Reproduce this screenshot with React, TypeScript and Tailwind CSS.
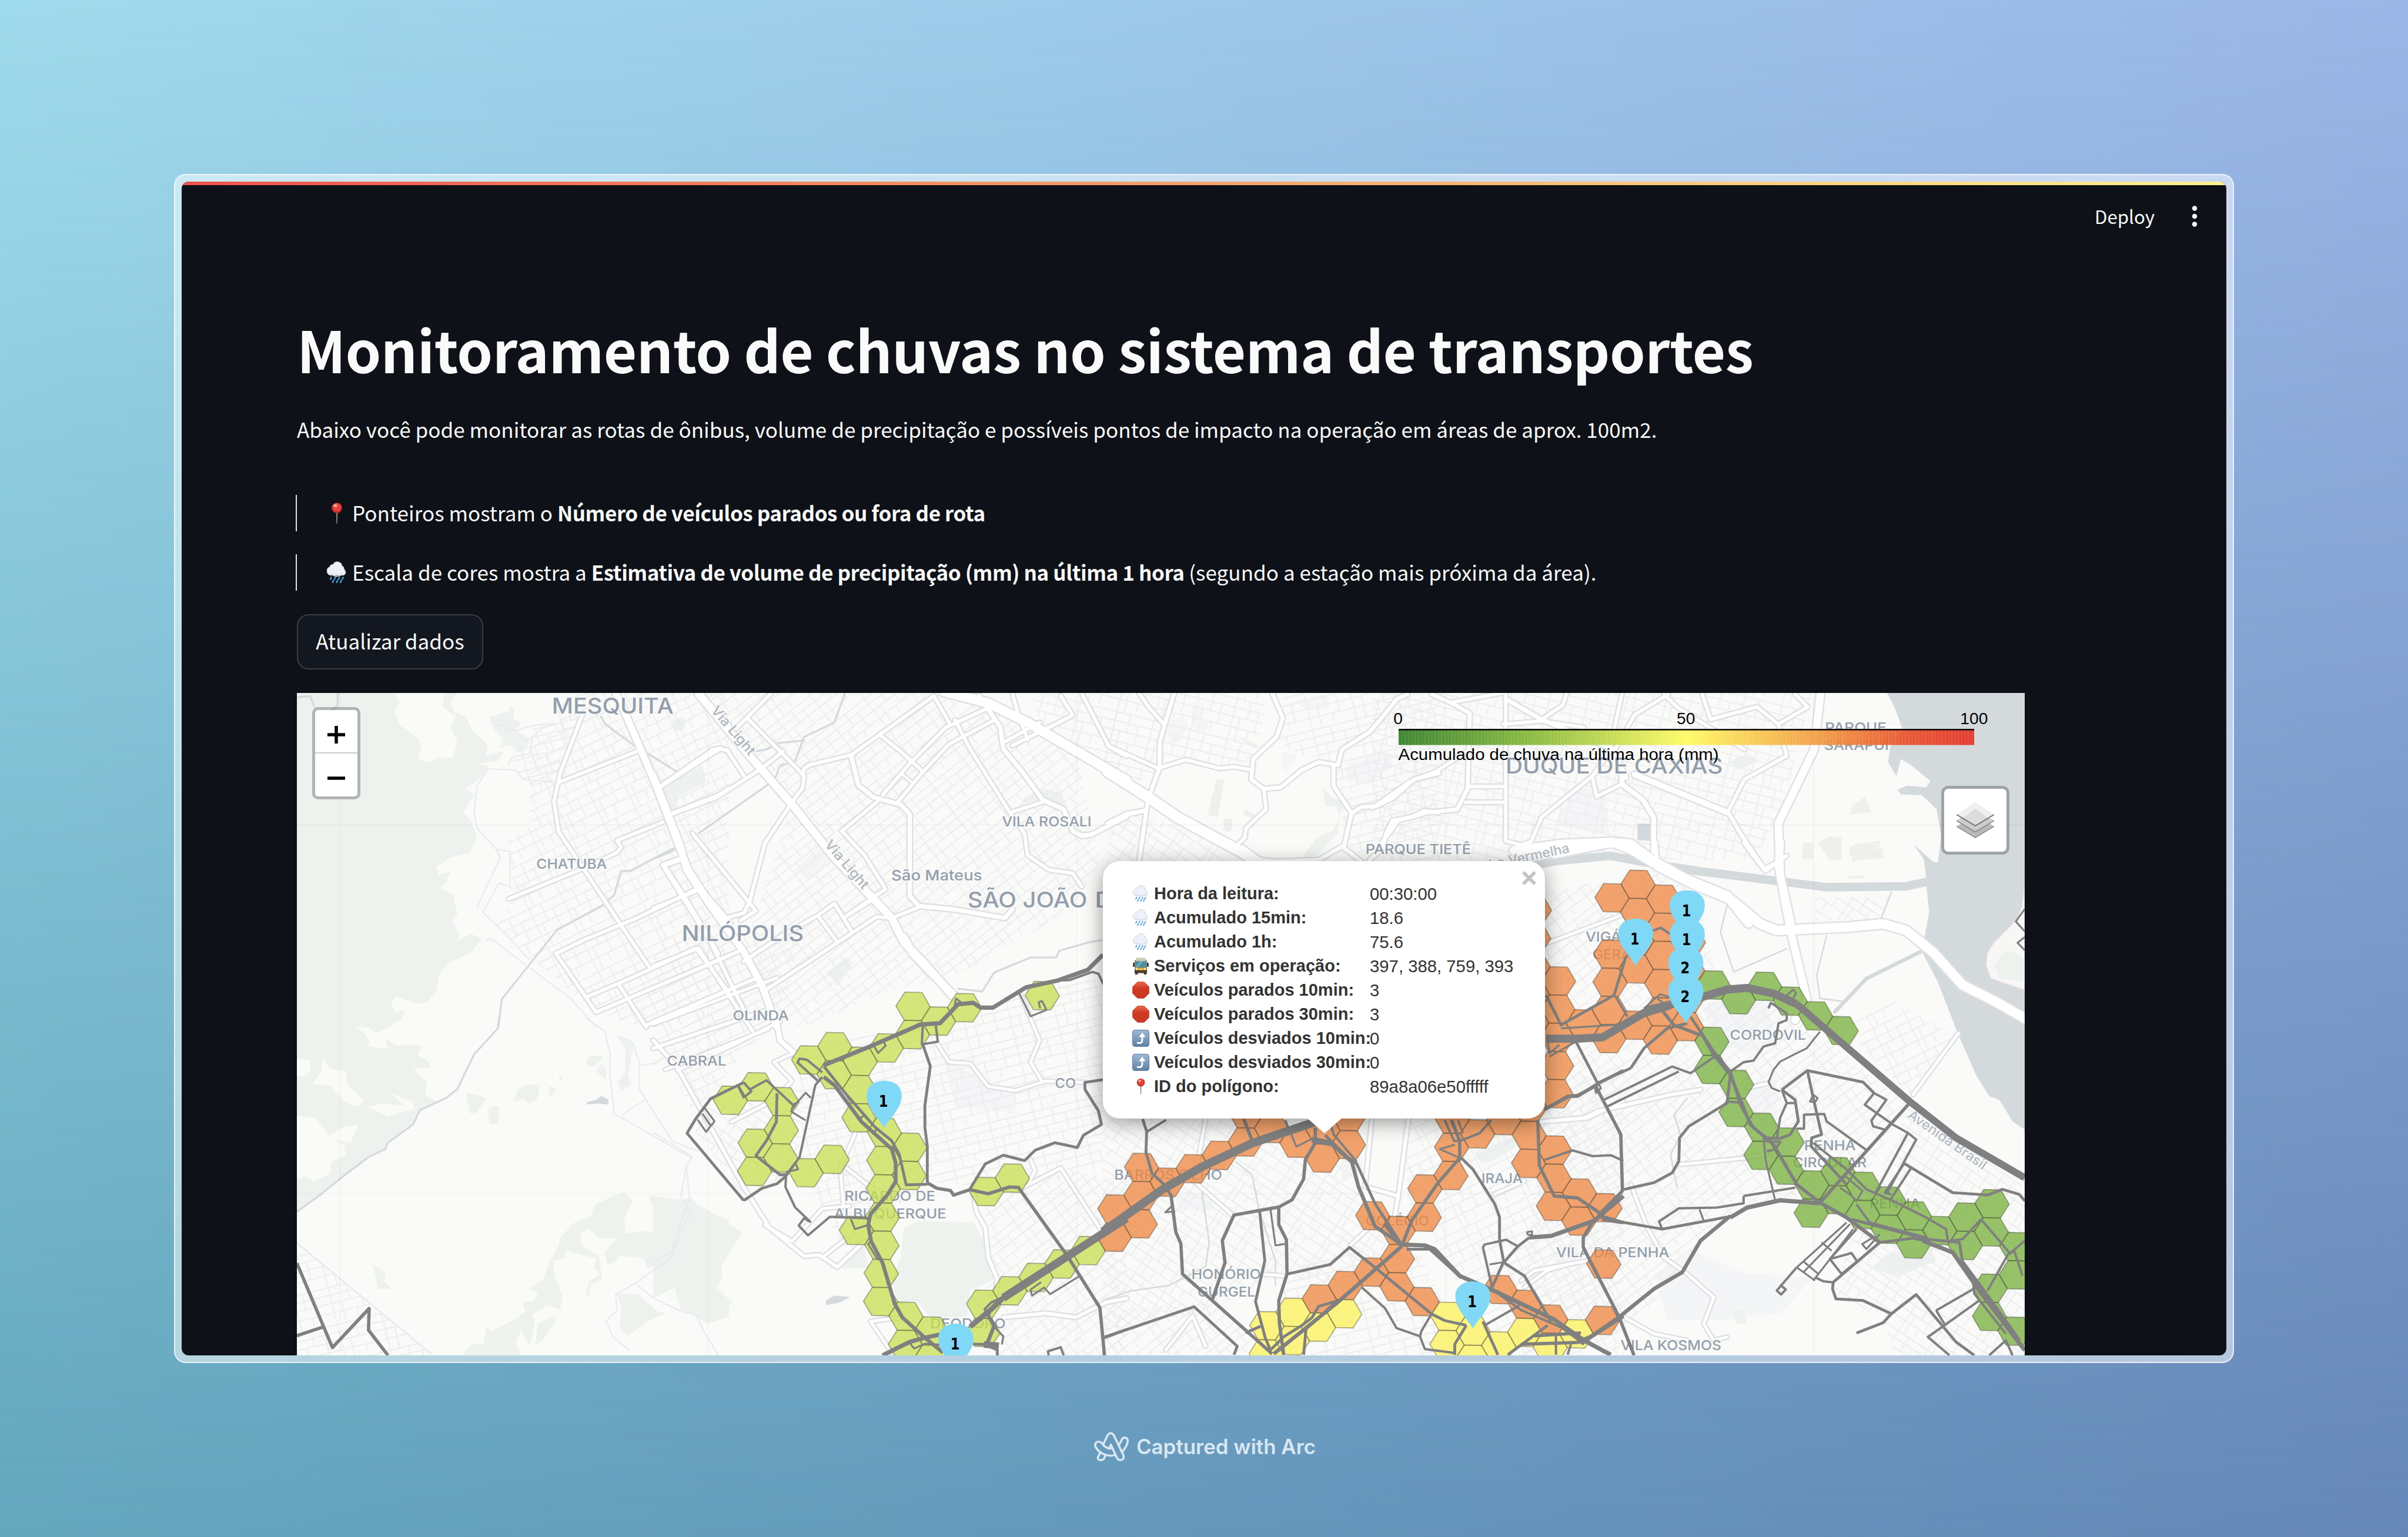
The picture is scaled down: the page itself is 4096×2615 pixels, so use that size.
import React from "react";

type Frame = [number, number, number, number];
type Line = [string, number, string];
type Pt = [number, number];

/* Survey sheets: origin and unit size of each one on the map plane. */
const SHEETS: Record<string, Frame> = {
  A: [620, 1450, 0.5867, 0.4592],
  B: [620, 2150, 0.5867, 0.4719],
  C: [1380, 1980, 0.6378, 0.574],
  D: [2280, 1780, 0.6696, 0.3827],
  E: [2330, 2250, 0.7015, 0.4018],
  F: [3200, 1780, 0.7015, 0.7015],
  G: [2900, 1450, 0.8929, 0.3333],
  H: [1380, 1460, 0.6378, 0.5102],
  I: [2340, 1460, 0.4464, 0.3333],
};

function project(sheet: string, pts: string): Pt[] {
  const [ox, oy, sx, sy] = SHEETS[sheet];
  return pts
    .trim()
    .split(/\s+/)
    .map((p) => {
      const [x, y] = p.split(",").map(Number);
      return [+(ox + x * sx).toFixed(1), +(oy + y * sy).toFixed(1)] as Pt;
    });
}
const toPoints = (pts: Pt[]) => pts.map((p) => p.join(",")).join(" ");
const at = (sheet: string, pts: string) => toPoints(project(sheet, pts));

/* ---------- land cover ---------- */
const GREEN: [string, string][] = [
  ["A", "12,30 362,30 382,75 362,120 385,180 450,240 460,280 450,335 490,350 515,330 575,328 590,250 565,190 585,140 535,95 545,30 590,30 565,75 580,120 620,140 645,205 700,270 690,320 755,300 735,345 665,355 700,370 690,400 660,430 650,445 620,470 650,500 610,580 640,620 660,690 635,765 560,790 515,830 520,870 565,850 550,900 530,930 575,960 590,1050 570,1080 600,1150 575,1180 640,1140 678,1160 640,1225 560,1270 525,1320 515,1400 480,1455 440,1460 370,1425 350,1460 365,1500 400,1490 390,1530 330,1568 12,1568"],
  ["A", "705,140 740,125 780,115 775,85 795,100 790,150 820,165 800,200 850,245 835,290 810,305 780,270 740,285 755,240 720,195"],
  ["A", "1325,465 1470,370 1488,440 1390,500 1370,570"],
  ["A", "1365,160 1400,150 1405,195 1370,210"],
  ["B", "12,0 390,0 350,40 300,70 250,25 200,10 205,30 245,60 275,100 265,130 340,140 330,95 370,125 468,125 445,165 490,200 490,228 430,228 480,290 475,350 520,378 460,415 435,470 340,560 330,590 270,625 130,760 60,830 12,870"],
  ["B", "620,340 650,345 695,360 660,425 635,430"],
  ["B", "700,410 720,395 740,400 738,475 705,475"],
  ["B", "790,380 810,320 835,300 888,300 875,370 850,385 830,365"],
  ["B", "920,310 935,310 947,325 930,350 920,345"],
  ["B", "955,262 965,258 970,280 960,285"],
  ["B", "1055,190 1065,172 1110,170 1108,190 1075,222 1058,215"],
  ["B", "1090,240 1110,205 1125,225 1125,280"],
  ["B", "1165,85 1220,110 1222,140 1205,260 1215,300 1185,330 1165,290 1195,250 1195,140"],
  ["B", "1280,800 1400,820 1430,805 1480,870 1568,905 1568,1060 1540,1110 1545,1170 1500,1250 1450,1240 1390,1240 1400,1200 1350,1110 1400,1100 1360,1090 1390,960 1425,930 1380,850 1290,840"],
  ["B", "1150,800 1190,785 1222,820 1190,900 1195,970 1250,955 1320,970 1345,930 1340,860 1330,850 1400,850 1425,940 1375,1010 1360,1080 1275,1125 1260,1075 1170,1068 1155,1100 1130,1105 1120,1050 1165,990 1105,990 1060,945 1030,970 1040,1020 1100,1070 1112,1170 1070,1200 1065,1250 1050,1240 1065,1180 1105,1150 1080,1120 1090,1080 1000,1050 985,1035 975,1080 935,1090 940,1160 970,1250 960,1305 910,1290 860,1330 870,1370 850,1470 820,1400 800,1450 820,1513 605,1513 640,1465 685,1460 695,1385 715,1405 800,1350 835,1315 825,1275 865,1270 880,1235 850,1215 900,1170 920,1100 955,1020 960,985 1010,920 1070,890 1085,840"],
  ["B", "1165,1235 1240,1240 1310,1315 1340,1325 1280,1355 1205,1425 1175,1390 1180,1300"],
  ["B", "1405,1310 1450,1280 1568,1290 1568,1340 1490,1370"],
  ["B", "285,1105 332,1145 325,1180 352,1215 305,1215"],
  ["B", "880,1370 940,1335 945,1360 900,1440 870,1470"],
  ["C", "830,1070 880,1045 1060,1050 1100,1130 1110,1200 1130,1260 1050,1300 1040,1400 920,1400 870,1340 810,1345 790,1260 820,1180"],
  ["C", "580,1220 700,1140 715,1220"],
  ["C", "575,130 640,75 660,95 610,180"],
  ["C", "0,950 90,970 110,1000 160,990 295,1090 240,1180 200,1280 265,1350 150,1390 90,1370 70,1290 0,1330"],
  ["H", "1220,450 1290,405 1350,420 1370,480 1290,450 1225,465"],
  ["H", "30,400 165,310 175,380 80,430 80,490 55,500"],
  ["H", "65,120 100,110 105,150 75,165"],
  ["I", "630,290 720,350 700,365 635,310"],
  ["I", "1020,610 1070,680 1120,700 1100,780 1090,900 990,1040 920,1060 990,930 1070,880 1100,800 1080,730 1030,730"],
  ["E", "1120,460 1250,370 1255,420 1180,500 1140,520"],
  ["F", "1080,1280 1120,1240 1250,1210 1270,1260 1150,1310"],
  ["F", "655,1410 690,1408 700,1450 670,1450"],
  ["F", "1430,380 1470,320 1520,340 1537,420 1480,410"],
  ["G", "840,480 890,430 910,470 870,530"],
];
const CLEARINGS: [string, string][] = [
  ["B", "12,185 60,190 60,240 40,262 12,265"],
  ["B", "105,175 130,230 190,240 190,290 250,370 240,398 200,390 170,360 130,305 65,300 100,240"],
  ["B", "12,440 80,450 130,530 180,490 235,480 205,560 140,545 180,570 190,620 135,645 130,700 70,735 40,710 12,730"],
  ["B", "265,400 320,385 400,395 350,340 430,375 435,410 370,430 340,445"],
];
const URBAN: [string, string][] = [
  ["I", "880,70 1000,20 1050,40 1050,115 960,125"],
  ["I", "290,210 360,140 380,230 340,320 290,320"],
  ["I", "400,100 460,80 440,180 480,210 460,260 400,230"],
  ["I", "1130,460 1220,430 1260,380 1350,400 1350,480 1230,590 1130,570"],
  ["I", "820,390 900,400 840,520"],
  ["H", "470,740 550,640 600,690 520,780"],
  ["E", "720,470 780,480 780,560 720,620"],
  ["E", "200,660 340,680 330,770 230,760"],
  ["F", "560,480 760,480 790,600 700,640 600,590"],
  ["F", "700,740 790,700 790,860 720,820"],
  ["F", "420,1300 540,1230 700,1300 900,1310 800,1420 620,1440 460,1440"],
  ["C", "960,440 1110,540 1200,560 1200,650 1000,620"],
  ["G", "480,640 550,660 560,950 430,880"],
];
const BUILDINGS: [string, string][] = [
  ["I", "515,555 552,565 522,800 475,785"],
  ["I", "550,810 590,812 590,870 570,895 550,880"],
  ["I", "650,745 705,790 690,815 640,775"],
  ["G", "1135,760 1165,700 1180,800 1130,815"],
  ["G", "1055,990 1080,950 1110,960 1110,1100 1080,1100"],
  ["G", "1140,1000 1200,980 1200,1020 1135,1050"],
  ["G", "1135,1070 1205,1050 1210,1085 1135,1110"],
  ["G", "1125,1205 1165,1200 1165,1215 1125,1218"],
  ["F", "870,0 900,0 900,50 865,50"],
  ["F", "1010,10 1110,20 1105,50 1010,40"],
];
const WATER: [string, string][] = [
  ["G", "1217,42 1543,42 1543,1500 1320,1500 1312,1300 1310,1210 1305,1100 1280,1000 1325,1110 1338,1120 1345,950 1335,780 1300,690 1250,685 1242,655 1265,630 1310,640 1320,600 1275,500 1250,460 1240,570 1220,480 1225,380 1255,280 1235,130"],
  ["F", "1240,60 1245,110 1250,200 1228,330 1275,420 1335,575 1390,700 1430,765 1460,775 1500,840 1537,865 1537,60"],
  ["B", "1055,380 1085,370 1110,352 1135,368 1132,390 1095,385 1058,390"],
  ["G", "627,870 660,870 660,980 627,975"],
  ["C", "570,1340 600,1320 652,1325 620,1345 575,1355"],
];

const RIVERS: Line[] = [
  ["A", 4, "1108,140 1120,170 1160,210 1220,265 1390,400"],
  ["A", 4, "1370,745 1300,790 1215,850 1180,850 1155,960 1110,1010 950,1120 840,1295 750,1440 738,1568"],
  ["A", 4, "12,50 60,45 75,95"],
  ["A", 4, "160,32 158,90 140,108"],
  ["B", 4, "740,0 735,50 650,165 590,320 550,360 455,415 430,480 340,560 330,590 270,625 180,710 100,790 12,870"],
  ["H", 4, "635,10 600,130 500,190 470,290 420,310 400,370 150,590"],
  ["H", 4, "340,250 380,240 415,215 500,205"],
  ["H", 4, "0,695 60,665 90,640"],
  ["C", 4, "1490,10 1440,20 1345,50 1335,75 1250,75 1130,130 1090,200 1010,190"],
  ["F", 18, "0,80 130,55 290,40 430,67 560,87 800,117 940,135 1180,132 1245,118"],
  ["F", 8, "965,510 1060,410 1222,330"],
  ["F", 3, "640,190 620,270 660,390 820,320"],
  ["F", 3, "940,280 910,400 920,470 1000,480"],
  ["F", 3, "1135,150 1100,240 1100,255"],
  ["F", 3, "520,770 480,820 500,880 470,940 490,1040"],
  ["E", 3, "400,510 450,580 470,760 520,1030 520,1160"],
  ["E", 3, "310,300 290,560 320,930 310,1060 200,1160 80,1190 0,1240"],
];

/* ---------- base streets, white with a soft casing ---------- */
const ROADS: Line[] = [
  ["A", 14, "1160,30 1200,140 1300,440 1390,740 1420,840 1480,960 1568,1090"],
  ["A", 7, "1040,130 960,400 938,530 955,670 1050,850 1180,1100 1280,1290"],
  ["A", 7, "958,440 1235,300"],
  ["A", 7, "1320,460 1510,290 1540,285 1568,300"],
  ["A", 7, "1350,590 1530,500 1568,470"],
  ["A", 7, "775,978 1040,840 1165,765 1180,740 1165,710 1330,625"],
  ["A", 7, "945,1230 1050,1165 1230,1070 1450,935"],
  ["A", 7, "945,1230 1090,1500 1568,1240"],
  ["A", 7, "1055,1430 1220,1340 1450,1205 1568,1410"],
  ["A", 7, "1395,800 1335,825 1410,970 1530,1230"],
  ["A", 7, "1170,1370 1270,1568"],
  ["A", 7, "1270,1560 1440,1470 1568,1400"],
  ["A", 9, "1455,30 1568,180"],
  ["H", 14, "0,350 90,640 110,740 190,890 300,1080 360,1220 410,1390"],
  ["H", 16, "150,10 300,240 460,470 600,690 790,940 830,1040 900,1130 990,1260"],
  ["C", 16, "830,0 860,60 1000,220"],
  ["H", 7, "390,10 275,155"],
  ["H", 7, "310,110 500,350 495,400 460,460 370,630 320,870 300,920 240,940"],
  ["H", 7, "20,400 220,240 245,245 300,350"],
  ["H", 7, "60,510 210,440 360,320 430,250"],
  ["H", 7, "495,350 500,320 520,305 655,265 930,20"],
  ["H", 9, "655,265 680,390 730,440 820,470 850,510 850,850 880,890 1000,905 1165,940 1190,905"],
  ["H", 7, "930,20 980,130"],
  ["H", 7, "750,180 820,250 890,330"],
  ["H", 7, "1110,70 970,150 850,300 760,430"],
  ["H", 7, "1130,120 980,220 890,340 810,460"],
  ["H", 5, "820,340 860,380"],
  ["H", 7, "1000,120 1050,240 1180,500 1230,590 1240,680 1310,740 1390,755 1420,810"],
  ["H", 9, "1080,20 1150,150 1160,240 1220,330 1290,450 1360,490 1390,580 1420,600 1450,595 1568,520"],
  ["H", 7, "1190,500 1290,460"],
  ["H", 7, "750,450 625,580 700,680 770,820 640,930"],
  ["H", 20, "960,0 1110,50 1240,130 1568,370"],
  ["H", 7, "1420,10 1510,230 1568,270"],
  ["H", 7, "1190,10 1210,100 1240,200"],
  ["H", 7, "1165,210 1280,130"],
  ["H", 7, "1190,225 1320,145 1390,100 1350,20"],
  ["H", 7, "130,590 340,910 290,950"],
  ["H", 7, "0,900 150,825"],
  ["H", 7, "95,690 30,720 190,1040 300,1320"],
  ["H", 7, "790,940 880,895"],
  ["H", 7, "790,940 740,935 370,1240"],
  ["H", 7, "430,1010 545,930 600,880 660,1000"],
  ["H", 7, "545,930 610,1040"],
  ["H", 7, "720,870 630,940"],
  ["H", 7, "300,1120 430,1010"],
  ["H", 7, "0,1140 150,1065 240,1240 330,1410"],
  ["H", 7, "0,1230 280,1080"],
  ["H", 7, "0,1370 340,1190"],
  ["H", 7, "0,1480 380,1320"],
  ["H", 6, "40,1568 380,1400"],
  ["I", 22, "0,510 200,680 330,800 620,1010 720,1090"],
  ["I", 7, "150,15 200,110 270,215"],
  ["I", 8, "315,15 270,215 248,320 245,490 215,600 190,700 150,1070"],
  ["I", 7, "0,345 240,490 370,435 530,490 600,480 680,500"],
  ["I", 8, "780,15 830,170 800,290 690,430 680,560 740,620 820,610 920,500 1000,450 1090,470 1110,370 1240,260 1310,150 1370,50 1420,20"],
  ["I", 7, "740,620 750,750 655,870 650,930 610,980"],
  ["I", 9, "0,840 90,780 170,760"],
  ["I", 8, "1070,470 1070,600 1155,775 1120,980"],
  ["I", 8, "1155,775 1200,735 1270,730 1350,680 1450,560 1568,520"],
  ["I", 8, "640,990 720,1070 800,1080 1000,1070 1110,985 1200,1080"],
  ["I", 8, "1240,1070 1300,1000 1320,900 1350,820 1440,800 1500,760 1568,770"],
  ["G", 8, "140,50 190,110 230,170 225,650 200,780 130,800 60,850 20,1000"],
  ["G", 7, "315,45 315,980 350,1005 375,985 400,830 520,570 560,420 590,50"],
  ["G", 9, "315,80 400,210 570,400 600,580"],
  ["G", 10, "590,560 590,620 640,720 665,830 665,1050"],
  ["G", 12, "620,560 840,800"],
  ["G", 8, "840,790 870,930 930,1170 975,1080"],
  ["G", 16, "1060,45 1045,400 960,870 965,1200 990,1500"],
  ["G", 7, "400,210 450,120 460,40"],
  ["G", 7, "190,100 310,40"],
  ["G", 7, "840,800 880,590 980,440 960,240 1030,130 1000,50"],
  ["G", 7, "780,50 800,210 910,130 960,240"],
  ["G", 7, "690,50 720,130 880,400"],
  ["G", 7, "700,50 620,180 570,420"],
  ["G", 7, "230,635 310,635"],
  ["G", 7, "220,735 310,735"],
  ["G", 7, "310,240 400,220 500,260"],
  ["G", 7, "520,570 530,700 590,620"],
  ["G", 7, "0,770 90,600 150,540 230,400"],
  ["F", 7, "690,0 750,80 790,60 820,40"],
  ["G", 20, "430,1060 560,990 610,1000 660,1100 740,1220 840,1330 890,1500"],
  ["F", 20, "0,25 150,5 300,0 350,20 450,80 550,130 650,170 740,245 790,265 1000,255 1110,245 1180,265 1260,330 1350,430 1450,480 1537,530"],
  ["F", 16, "800,0 795,70 830,260 880,470 845,535"],
  ["F", 8, "425,0 430,80"],
  ["F", 6, "1337,575 1200,760"],
  ["F", 7, "90,840 210,830 250,810 470,760 560,745"],
  ["F", 6, "500,970 700,950 760,940"],
  ["F", 6, "350,1030 400,1160 450,1250 520,1300 600,1370 570,1450 600,1500 640,1490"],
  ["F", 6, "20,1320 60,1290 220,1260"],
  ["F", 6, "0,340 320,220"],
  ["F", 6, "700,740 765,725"],
  ["F", 6, "330,1430 420,1480 520,1500"],
  ["C", 7, "0,380 80,480 300,920 385,1070 500,1175 550,1170 610,1215 700,1120"],
  ["C", 6, "80,490 260,400 420,310"],
  ["C", 6, "0,320 410,150"],
  ["C", 10, "410,320 420,380 560,520"],
  ["C", 6, "260,680 400,600 460,530 400,460 460,430"],
  ["C", 6, "940,390 980,460 1050,465 1110,550 1200,565 1300,530 1430,535"],
  ["C", 6, "1215,205 1280,380 1250,460 1290,535"],
  ["C", 7, "1060,940 1070,1010 1100,1070 1110,1180 1140,1260 1130,1350"],
  ["C", 6, "1490,1090 1350,850 1220,925"],
  ["C", 6, "370,1060 460,1120 560,1000 650,990"],
  ["C", 6, "560,1180 640,1110"],
  ["C", 6, "670,720 620,850 630,990"],
  ["C", 6, "640,850 730,930"],
  ["C", 7, "1160,1400 1300,1385 1400,1400 1500,1345 1568,1330"],
  ["C", 6, "830,1400 720,1415 790,1530"],
  ["C", 6, "1250,820 1265,860 1245,900"],
  ["E", 6, "280,620 390,790"],
  ["E", 7, "810,290 790,640 890,690 880,790"],
  ["E", 7, "920,290 890,690"],
  ["E", 6, "1180,680 1270,610"],
  ["E", 6, "190,1500 270,1320 310,1480"],
  ["E", 6, "800,860 745,950"],
  ["E", 6, "1320,300 1460,280 1568,190"],
  ["E", 6, "480,1100 545,1110"],
  ["E", 6, "310,285 290,470"],
  ["E", 6, "1270,1170 1340,1080 1400,1050"],
];

/* Thin outlines: paths, coast roads and quarry tracks. */
const TRACKS: Line[] = [
  ["A", 2.5, "700,380 660,460 650,580 660,650 730,750 745,790 710,880 660,1020"],
  ["A", 2.5, "700,380 800,385 830,430 940,440"],
  ["A", 2.5, "690,1170 710,1160 1000,1440 1090,1568"],
  ["A", 2.5, "680,1040 740,1110 800,1190 850,1260"],
  ["A", 2.5, "730,750 780,760 780,920"],
  ["A", 2.5, "680,1045 740,905 790,930"],
  ["A", 2.5, "725,170 800,205 860,180 940,170"],
  ["A", 2.5, "770,360 790,325 850,310 860,230 900,190 940,175"],
  ["B", 2.5, "1050,0 1120,60 1140,160 1140,270 1155,430 1190,455 1435,630 1415,660 1395,800 1430,880 1395,960 1360,1075 1230,1190 1160,1240 1165,1310 1125,1360 1150,1430 1210,1490"],
  ["B", 2.5, "1165,80 1220,110 1245,200 1245,320 1270,370 1365,555 1460,600"],
  ["B", 2.5, "1230,1190 1300,1260 1395,1315 1450,1330 1480,1410 1530,1513"],
  ["B", 2.5, "1245,215 1300,205 1340,175"],
  ["B", 2.5, "1185,440 1200,420 1265,370"],
  ["B", 3, "12,1010 500,1510"],
  ["C", 2.5, "0,720 60,760 130,810 110,840 120,960 60,1160 0,1200"],
];

/* ---------- bus routes ---------- */
const ROUTES: Line[] = [
  ["C", 9, "1490,65 1440,120 1340,160 1235,185 1125,260 1085,260 1060,242 1010,247 950,317 885,322 720,402 565,472"],
  ["C", 5, "1568,260 1490,170 1475,135 1455,128 1380,158 1330,160"],
  ["C", 4, "1020,240 1003,226 997,262"],
  ["C", 4, "1212,205 1250,292 1303,268 1288,235 1277,240 1282,262"],
  ["C", 5, "893,322 890,395 943,385 936,325"],
  ["C", 6, "893,395 918,475 900,620 900,700 908,770 908,905"],
  ["C", 6, "908,910 838,912 815,800 790,750 735,700 640,580 565,475"],
  ["C", 4, "728,395 760,378 770,400 745,427 728,395"],
  ["C", 8, "565,515 600,545 690,680 790,780 803,830 803,900 775,950 720,1020 712,1060 722,1120 760,1200 800,1350 825,1400 900,1475 960,1530"],
  ["C", 5, "548,532 478,462 485,447 510,452 560,498"],
  ["C", 5, "560,515 537,545 485,810 440,880 438,920 470,995 522,1050"],
  ["C", 5, "522,1050 500,1035 482,1062 513,1098 585,1030 712,1035"],
  ["C", 4, "655,1038 668,1075 712,1060"],
  ["C", 6, "300,970 112,722 140,670 190,595 300,535"],
  ["C", 5, "300,535 325,568 300,590 280,545"],
  ["C", 5, "322,560 375,527 470,625"],
  ["C", 4, "458,632 505,573 522,592"],
  ["C", 4, "470,610 457,642 505,675"],
  ["C", 6, "410,575 408,680 375,750 340,805 420,875 440,875"],
  ["C", 4, "440,875 470,830 480,855 440,865"],
  ["C", 6, "300,970 360,925 410,908 440,880"],
  ["C", 4, "170,628 203,678 175,717 147,672"],
  ["C", 4, "163,650 190,695"],
  ["C", 4, "700,655 680,672 730,722 742,705 700,660"],
  ["C", 4, "722,1120 712,1130 745,1190"],
  ["C", 7, "908,905 940,925 985,933 995,950 1048,930 1110,945 1180,920 1210,922 1370,1170 1480,1365 1495,1540"],
  ["C", 6, "1048,930 1100,835 1160,803 1230,823 1265,785 1330,757 1405,775 1425,730 1485,690 1475,640 1430,560 1430,535 1490,525"],
  ["C", 17, "1568,1035 1370,1177 1160,1328"],
  ["C", 11, "1160,1328 1120,1370 1050,1435"],
  ["C", 5, "1160,1325 1120,1345 1098,1370 1110,1395 1130,1350"],
  ["C", 8, "1110,1395 1130,1430 1105,1500"],
  ["C", 4, "1130,1435 1160,1470 1155,1500"],
  ["C", 14, "1095,1500 1145,1505"],
  ["C", 6, "1060,1498 1100,1500 1140,1520 1140,1540"],
  ["C", 9, "760,1540 850,1490 900,1475 950,1463"],
  ["C", 4, "850,1495 865,1515 900,1497 950,1500"],
  ["C", 4, "1285,1270 1250,1298 1255,1320 1295,1290 1315,1315 1410,1250"],
  ["C", 5, "1310,1540 1308,1525 1350,1510 1360,1540"],
  ["C", 6, "1495,1475 1568,1445"],
  ["B", 7, "12,1100 140,1478 272,1303 270,1400 340,1513"],
  ["B", 7, "12,1425 108,1385"],
  ["E", 18, "0,878 180,655 300,535 450,412 640,300"],
  ["E", 6, "120,285 132,350 130,460 148,570 185,630 210,700"],
  ["E", 5, "130,355 190,290"],
  ["E", 7, "205,680 220,880 235,940 240,1100 330,1240 510,1520"],
  ["E", 4, "213,735 188,776 218,770"],
  ["E", 6, "0,1435 275,1272 405,1480 395,1525"],
  ["E", 7, "425,285 452,410"],
  ["E", 4, "550,290 583,430 640,380"],
  ["E", 7, "640,330 640,410 610,500 605,600 570,710 530,748 395,790 360,925 368,1040 330,1235"],
  ["E", 6, "472,762 488,1030 460,1245 490,1440 505,1500 545,1430 600,1370 630,1330 650,1270 710,1240"],
  ["E", 7, "530,750 530,840 553,920 555,1100 530,1240 532,1360 545,1525"],
  ["E", 4, "505,760 520,950 548,942"],
  ["E", 6, "430,1410 475,1375"],
  ["E", 6, "605,1525 612,1390 700,1250"],
  ["E", 6, "555,1100 685,1050 743,960 830,1080 990,1310 1030,1345 1095,1370"],
  ["E", 5, "780,1170 850,1280 885,1385 955,1427 970,1495 1058,1515"],
  ["E", 5, "990,1310 960,1400 955,1430"],
  ["E", 8, "630,400 690,418 750,510 770,640 820,850 900,945"],
  ["E", 6, "670,370 740,490 765,520 820,730 900,945"],
  ["E", 5, "685,300 695,365 765,510"],
  ["E", 10, "630,390 690,412"],
  ["E", 8, "850,840 900,950"],
  ["E", 8, "515,1520 700,1260 900,955"],
  ["E", 7, "900,955 930,820 1010,620 1075,490 1075,400 1050,290"],
  ["E", 5, "1030,290 1058,400 1075,400 1135,360 1170,290"],
  ["E", 4, "1070,290 1085,360"],
  ["E", 4, "1060,420 1015,443 1070,485"],
  ["E", 6, "1080,490 1115,550 1180,730 1195,800 1195,920 1208,1040 1270,1110 1350,1350"],
  ["E", 9, "900,945 970,950 1000,970 1075,1110 1180,1190 1360,1340 1450,1450 1530,1525"],
  ["E", 6, "915,970 985,970 1080,1120"],
  ["E", 5, "1180,1190 1260,1290 1380,1380 1450,1470"],
  ["E", 5, "1175,1190 1145,960 1150,945 1215,920 1250,955"],
  ["E", 6, "1285,908 1250,955 1205,1045 1170,1180"],
  ["E", 4, "1165,1050 1205,1038"],
  ["E", 9, "1285,908 1350,900 1480,820 1520,760 1568,690"],
  ["E", 4, "1280,895 1278,880 1293,875 1293,893 1280,895"],
  ["E", 5, "1150,1370 1255,1265"],
  ["E", 6, "1145,1350 1190,1525"],
  ["E", 6, "1095,1370 1060,1470 1060,1525"],
  ["E", 7, "1310,290 1315,530 1360,690 1430,700 1490,770 1510,815 1568,830"],
  ["E", 5, "1330,500 1415,450 1475,480 1530,475 1568,505"],
  ["E", 7, "1330,235 1400,165 1430,165 1495,95 1568,30"],
  ["E", 6, "1220,1525 1340,1370"],
  ["E", 7, "1300,1425 1440,1410"],
  ["E", 7, "1260,1470 1430,1460"],
  ["E", 5, "1365,1425 1365,1525"],
  ["E", 5, "1410,1470 1400,1525"],
  ["E", 9, "1430,1460 1470,1430 1568,1320"],
  ["F", 17, "95,591 190,591 265,587 410,502 560,467 640,443 700,438 780,455 850,487"],
  ["F", 15, "850,487 1190,780 1330,890 1537,1010"],
  ["F", 6, "95,460 140,550 300,460 335,345"],
  ["F", 5, "410,268 440,257 475,280"],
  ["F", 4, "135,610 105,635 100,600"],
  ["F", 4, "105,645 185,600"],
  ["F", 5, "305,465 340,525"],
  ["F", 4, "390,500 438,457 500,475 560,480"],
  ["F", 4, "430,470 470,500 300,550 140,560"],
  ["F", 7, "440,500 480,550 560,580"],
  ["F", 7, "560,570 600,640 650,700 710,850 780,910 850,1030 920,1085"],
  ["F", 6, "530,525 600,630 650,690 680,790 720,860 760,890 800,892 830,880 855,840 845,775 805,745"],
  ["F", 6, "350,680 390,620 460,560 520,545"],
  ["F", 6, "185,600 250,725 350,680"],
  ["F", 7, "90,805 165,765 190,762 250,730"],
  ["F", 7, "245,735 320,880 325,1050 260,1115"],
  ["F", 4, "250,720 260,740 245,755 240,730"],
  ["F", 5, "270,775 475,675 530,695 610,640"],
  ["F", 5, "280,795 495,690"],
  ["F", 6, "330,1045 420,1025 475,995 495,960 497,890 525,855 640,785 650,700"],
  ["F", 5, "640,780 690,785"],
  ["F", 5, "650,690 690,662 720,657 750,615 785,605 795,545 820,535 820,515 772,483 765,500"],
  ["F", 4, "825,490 848,455 840,443 820,460"],
  ["F", 4, "920,570 880,620 800,660 780,685 765,722 775,740 800,750"],
  ["F", 6, "805,745 882,687 1050,722 1083,755"],
  ["F", 5, "1083,755 1120,775 1075,838 1080,855 1115,865"],
  ["F", 5, "1083,755 1055,790 1140,850 1185,875 1085,1060"],
  ["F", 6, "882,687 900,770 925,880 895,890 893,915 1000,1030"],
  ["F", 4, "900,760 890,780 905,783 913,770 900,760"],
  ["F", 5, "805,745 820,785 845,785"],
  ["F", 5, "820,785 800,830 790,890"],
  ["F", 5, "850,862 872,862 872,820 933,818 940,840 1065,930"],
  ["F", 5, "1185,875 1210,895 1120,1060"],
  ["F", 5, "1175,965 1115,1055 1135,1060"],
  ["F", 7, "1190,785 1060,930 920,1085"],
  ["F", 6, "1170,965 1320,1055 1425,1062 1470,1045 1520,1060 1537,1080"],
  ["F", 5, "1195,980 1130,1080"],
  ["F", 5, "900,905 1000,985 1060,1045 1140,1080 1240,1130 1300,1165 1305,1200"],
  ["F", 4, "980,1040 1010,1060 1030,1080 1048,1050 990,1000"],
  ["F", 4, "750,890 757,960 785,1078"],
  ["F", 5, "750,900 800,902 785,925 760,930"],
  ["F", 5, "690,1065 845,1040"],
  ["F", 5, "445,1165 435,1142 495,1102 610,1100 690,1087 690,1065"],
  ["F", 4, "557,1105 570,1140"],
  ["F", 6, "260,1125 330,1145 445,1165 660,1125"],
  ["F", 9, "650,1130 700,1100 800,1078 920,1087"],
  ["F", 8, "920,1085 1000,1130 1100,1205"],
  ["F", 6, "1100,1205 1200,1192 1240,1200"],
  ["F", 6, "1015,1135 1240,1195 1340,1205 1350,1265"],
  ["F", 9, "1230,1200 1320,1235 1400,1350 1537,1530"],
  ["F", 8, "1350,1265 1420,1360 1520,1500"],
  ["F", 5, "1380,1310 1385,1360 1480,1480"],
  ["F", 5, "1030,1090 1070,1145 1240,1190"],
  ["F", 5, "1310,1200 1350,1195 1405,1135 1490,1235 1425,1350"],
  ["F", 5, "1490,1240 1505,1230 1530,1305"],
  ["F", 5, "1537,1200 1490,1240"],
  ["F", 7, "240,1135 207,1190 207,1220 315,1430 360,1545"],
  ["F", 8, "200,1510 315,1430 420,1345 505,1295 560,1200 650,1125"],
  ["F", 4, "850,1280 1000,1145"],
  ["F", 4, "870,1295 1010,1150"],
  ["F", 4, "900,1320 1020,1165"],
  ["F", 4, "850,1280 905,1320"],
  ["F", 4, "870,1262 915,1300"],
  ["F", 4, "925,1205 955,1230"],
  ["F", 5, "850,1280 790,1350 803,1362 817,1347 800,1332"],
  ["F", 6, "1100,1205 960,1325 958,1345 968,1375 1050,1380 1135,1420"],
  ["F", 5, "905,1310 930,1322 960,1325"],
  ["F", 6, "1030,1478 1110,1447 1135,1420 1210,1362 1330,1505 1385,1545"],
  ["F", 5, "1030,1165 950,1255 1015,1237 1032,1262 985,1300 950,1255"],
  ["F", 4, "1100,1180 1060,1225 1047,1210 1080,1190"],
  ["F", 5, "1270,1410 1400,1335"],
  ["F", 5, "1400,1380 1245,1490 1310,1545"],
  ["F", 5, "1270,1410 1295,1450"],
  ["F", 5, "1430,1545 1480,1500 1500,1545"],
  ["F", 4, "1537,200 1510,238 1537,268"],
  ["F", 4, "1537,285 1515,302 1537,325"],
];

/* ---------- hexagonal precipitation cells ---------- */
const CELLS: [string, string, string][] = [
  ["#c8df50", "C", "861,255 948,309 1030,260 1290,215 861,358 775,407 603,402 517,450 690,457 603,505 687,560 687,663 770,718 850,775 850,875 765,822 765,926 768,1031 762,1134 673,1083 756,1237 756,1341 840,1395 923,1450 835,1500 920,1552 340,548 262,600 425,605 428,708 342,757 425,810 336,861 510,866 595,818 1105,940 1190,888 1445,1157 1357,1205 1272,1252 1185,1304 1098,1352 1090,1460"],
  ["#ef8840", "E", "117,542 190,620 265,548 340,480 112,690 37,760 112,838 37,907 430,410 505,340 430,270 590,420 665,490 665,340 740,420 740,275 1050,290 1050,435 1057,590 970,655 970,805 890,870 810,800 890,1025 815,1095 885,1172 965,1250 727,1163 655,1238 1130,365 1210,295 1285,370 1285,520 1365,450 1360,600 1435,680 1360,750 1435,830 1510,755 1370,5 1370,155 1285,222 1510,1050 1195,1190 1270,1262 1350,1340 1505,1350"],
  ["#ef8840", "F", "290,165 371,125 370,212 455,170 455,258 285,338 285,420 368,298 365,385 448,340 448,425 525,300 525,385 522,470 60,205 60,290 58,375 130,418 52,460 130,503 52,545 210,545 135,590 285,508 365,550 285,593 445,510 445,595 518,552 130,675 130,758"],
  ["#fcf25a", "E", "580,1305 495,1375 565,1455 655,1385 730,1313 495,1525 1040,1330 1035,1475 1115,1405 1190,1480 1265,1410 1350,1490 1425,1415 1115,1550"],
  ["#77b03c", "F", "600,430 673,478 750,435 827,480 905,523 984,568 597,600 595,685 669,730 669,815 742,860 820,905 742,945 820,990 895,1036 975,993 971,1078 895,1120 1050,1037 1050,1123 1127,1085 1202,1130 1123,1165 1280,1172 1202,1213 1358,1132 1435,1090 1358,1215 1430,1178 1508,1222 1508,1308 1430,1347 1427,1432 1508,1475"],
];
/* Lattice basis shared by every cell. */
const ORIGIN: Pt = [1929.1, 2126.4];
const V1: Pt = [-1.35, 59.55];
const V2: Pt = [53.8, 31.2];
const CORNERS: Pt[] = [
  [36.3, 1],
  [17.5, 30.2],
  [-18.8, 29.3],
  [-36.3, -1],
  [-17.5, -30.2],
  [18.8, -29.3],
];
function buildCells() {
  const seen = new Set<string>();
  const out: { key: string; fill: string; points: string }[] = [];
  const det = V2[0] * V1[1] - V2[1] * V1[0];
  for (const [fill, sheet, pts] of CELLS) {
    for (const [x, y] of project(sheet, pts)) {
      const dx = x - ORIGIN[0];
      const dy = y - ORIGIN[1];
      const i = Math.round((dx * V1[1] - dy * V1[0]) / det);
      const j = Math.round((dy * V2[0] - dx * V2[1]) / det);
      const key = i + ":" + j;
      if (seen.has(key)) continue;
      seen.add(key);
      const cx = ORIGIN[0] + i * V2[0] + j * V1[0];
      const cy = ORIGIN[1] + i * V2[1] + j * V1[1];
      out.push({ key, fill, points: toPoints(CORNERS.map(([a, b]) => [+(cx + a).toFixed(1), +(cy + b).toFixed(1)] as Pt)) });
    }
  }
  return out;
}
const CELL_SHAPES = buildCells();

/* ---------- faint street grids ---------- */
const GRIDS: { id: string; rot: number; w: number; h: number }[] = [
  { id: "g1", rot: -26, w: 74, h: 92 },
  { id: "g2", rot: -38, w: 86, h: 76 },
  { id: "g3", rot: 14, w: 80, h: 88 },
  { id: "g4", rot: -14, w: 96, h: 80 },
  { id: "g5", rot: 34, w: 74, h: 80 },
];
const DISTRICTS: [string, string, string][] = [
  ["g1", "A", "1060,30 1568,30 1568,1568 1250,1568 1090,1500 800,1190 730,1100 800,960 770,700 850,640 850,300"],
  ["g4", "A", "780,330 860,200 1030,30 1060,30 960,400 900,470 820,440"],
  ["g1", "C", "0,0 480,0 430,300 300,420 210,560 130,640 0,400"],
  ["g2", "H", "150,10 980,10 1240,130 1400,250 1480,700 1400,900 1000,1180 780,1240 480,1400 370,1260 320,1000 460,470"],
  ["g3", "H", "1240,10 1568,10 1568,370 1300,170"],
  ["g3", "I", "0,15 760,15 700,420 620,480 380,440 100,600 0,500"],
  ["g5", "I", "0,820 170,780 400,900 560,1000 560,1090 0,1090"],
  ["g4", "I", "840,15 1568,15 1568,1090 1150,1090 1080,640 1060,460 900,400 800,300"],
  ["g3", "G", "0,45 1040,45 960,860 900,1100 650,1100 300,1100 0,1100"],
  ["g5", "C", "130,700 230,560 500,560 480,800 430,900 300,960"],
  ["g4", "C", "480,400 920,330 1200,200 1430,140 1490,170 1490,850 1200,930 900,900 640,1180 560,1000 500,860"],
  ["g2", "C", "1100,960 1350,850 1568,900 1568,1540 1100,1540 1110,1100"],
  ["g5", "E", "0,285 780,285 760,500 800,850 900,950 800,1200 540,1100 300,1300 0,1400"],
  ["g2", "E", "0,1300 330,1240 500,1520 0,1525"],
  ["g4", "E", "540,1100 740,960 960,1000 1100,1525 540,1525"],
  ["g1", "E", "900,285 1568,0 1568,1525 1200,1525 1000,950 920,700"],
  ["g2", "F", "100,150 420,80 560,160 600,380 800,500 900,560 1180,790 1000,1100 800,1080 700,1100 560,1200 380,1440 100,1545 0,1540 90,800 90,200"],
  ["g5", "F", "1190,790 1537,1040 1537,1545 1150,1545 1100,1420 960,1370 1020,1160 1100,1000"],
  ["g5", "F", "905,165 1135,165 1100,235 905,235"],
  ["g1", "F", "990,560 1140,480 1330,580 1190,760"],
  ["g4", "B", "12,1010 500,1513 12,1513"],
];

type Label = { t: string; x: number; y: number; w: number; s?: number; r?: number; c?: string };
const LABELS: Label[] = [
  { t: "MESQUITA", x: 1165.8, y: 1508, w: 257, s: 46 },
  { t: "CHATUBA", x: 1133, y: 1836, w: 149 },
  { t: "NILÓPOLIS", x: 1440, y: 1988.6, w: 258, s: 45 },
  { t: "SÃO JOÃO", x: 2044, y: 1917.6, w: 253, s: 45 },
  { t: "DE MERITI", x: 2313, y: 1917.6, w: 270, s: 45 },
  { t: "São Mateus", x: 1883, y: 1860.5, w: 192, s: 31 },
  { t: "VILA ROSALI", x: 2117, y: 1746, w: 189 },
  { t: "OLINDA", x: 1548, y: 2156, w: 118.6 },
  { t: "CABRAL", x: 1409, y: 2252, w: 125 },
  { t: "CO", x: 2229, y: 2298.6, w: 44 },
  { t: "RICARDO DE", x: 1784, y: 2537, w: 192 },
  { t: "ALBUQUERQUE", x: 1762, y: 2574, w: 237 },
  { t: "DEODORO", x: 1965, y: 2807, w: 160 },
  { t: "PARQUE TIETÊ", x: 2885, y: 1805, w: 223 },
  { t: "PARQUE", x: 3856, y: 1547, w: 130 },
  { t: "SARAPUÍ", x: 3854, y: 1584, w: 137 },
  { t: "DUQUE DE CAXIAS", x: 3181, y: 1634, w: 459, s: 45 },
  { t: "VIGÁRIO", x: 3350, y: 1989.5, w: 128 },
  { t: "GERAL", x: 3365, y: 2026.6, w: 98 },
  { t: "CORDOVIL", x: 3655, y: 2196.4, w: 161 },
  { t: "PENHA", x: 3812, y: 2430, w: 109 },
  { t: "CIRCULAR", x: 3788, y: 2466.5, w: 156 },
  { t: "PENHA", x: 3950, y: 2553, w: 108 },
  { t: "VILA DA PENHA", x: 3288, y: 2657, w: 239 },
  { t: "VILA KOSMOS", x: 3424, y: 2853, w: 213 },
  { t: "BARROS FILHO", x: 2354, y: 2493, w: 228 },
  { t: "HONÓRIO", x: 2517, y: 2703, w: 147 },
  { t: "GURGEL", x: 2530, y: 2740, w: 122 },
  { t: "COLÉGIO", x: 2885, y: 2590, w: 135 },
  { t: "IRAJÁ", x: 3130, y: 2500, w: 87 },
  { t: "Via Light", x: 1501, y: 1502, w: 126, s: 29, r: 49.5, c: "#aeb6c0" },
  { t: "Via Light", x: 1741, y: 1785, w: 126, s: 29, r: 49.5, c: "#aeb6c0" },
  { t: "Linha Vermelha", x: 3108, y: 1845, w: 214, s: 28, r: -12, c: "#b3bbc5" },
  { t: "Avenida Brasil", x: 4029, y: 2360, w: 196, s: 28, r: 35, c: "#b3bbc5" },
];

const PINS: { x: number; y: number; n: string }[] = [
  { x: 1868, y: 2383.5, n: "1" },
  { x: 2019.5, y: 2897, n: "1" },
  { x: 3112, y: 2807.7, n: "1" },
  { x: 3456, y: 2041, n: "1" },
  { x: 3565, y: 1981, n: "1" },
  { x: 3565, y: 2042, n: "1" },
  { x: 3562, y: 2102, n: "2" },
  { x: 3562, y: 2162, n: "2" },
];

function MapCanvas() {
  return (
    <svg viewBox="627 1464 3651 1400" preserveAspectRatio="none" className="block h-full w-full">
      <defs>
        {GRIDS.map((g) => (
          <pattern key={g.id} id={g.id} width={g.w} height={g.h} patternUnits="userSpaceOnUse" patternTransform={`rotate(${g.rot})`}>
            <path
              d={`M0 8H${g.w}M0 ${g.h * 0.3}H${g.w}M0 ${g.h * 0.52}H${g.w}M0 ${g.h * 0.78}H${g.w}M14 0V${g.h}M${g.w * 0.55} 8V${g.h * 0.52}M${g.w * 0.82} ${g.h * 0.3}V${g.h * 0.78}M${g.w * 0.36} ${g.h * 0.52}V${g.h + 8}M${g.w * 0.36} 0V8M${g.w * 0.66} ${g.h * 0.78}V${g.h}`}
              fill="none"
              stroke="#ebecee"
              strokeWidth="2.2"
            />
          </pattern>
        ))}
        <linearGradient id="rain">
          <stop offset="0" stopColor="#2f7c22" />
          <stop offset="0.25" stopColor="#8bbc36" />
          <stop offset="0.5" stopColor="#fffb5c" />
          <stop offset="0.72" stopColor="#f29d3e" />
          <stop offset="0.88" stopColor="#e95027" />
          <stop offset="1" stopColor="#e52e24" />
        </linearGradient>
        <linearGradient id="rainStripe" x1="0" x2="7" gradientUnits="userSpaceOnUse" spreadMethod="repeat">
          <stop offset="0" stopColor="#fff" stopOpacity="0.12" />
          <stop offset="0.5" stopColor="#fff" stopOpacity="0" />
        </linearGradient>
      </defs>
      <rect x="627" y="1464" width="3651" height="1400" fill="#fafaf8" />
      {URBAN.map(([f, p], i) => (
        <polygon key={i} points={at(f, p)} fill="#f4f5f6" />
      ))}
      <g fill="#edf2ee">
        {GREEN.map(([f, p], i) => (
          <polygon key={i} points={at(f, p)} />
        ))}
      </g>
      <g fill="#fafaf8">
        {CLEARINGS.map(([f, p], i) => (
          <polygon key={i} points={at(f, p)} />
        ))}
      </g>
      {BUILDINGS.map(([f, p], i) => (
        <polygon key={i} points={at(f, p)} fill="#efefed" />
      ))}
      {DISTRICTS.map(([id, f, p], i) => (
        <polygon key={i} points={at(f, p)} fill={`url(#${id})`} />
      ))}
      <g fill="#d4dadc">
        {WATER.map(([f, p], i) => (
          <polygon key={i} points={at(f, p)} />
        ))}
      </g>
      <polygon points={at("F", "1537,130 1528,190 1515,230 1445,300 1425,330 1420,370 1435,410 1537,445")} fill="#f7f7f5" stroke="#e9dcdc" strokeWidth="2" />
      <polygon points={at("F", "1445,370 1480,325 1537,345 1537,420 1460,408")} fill="#edf2ee" />
      <g fill="none" stroke="#d4dadc" strokeLinejoin="round" strokeLinecap="round">
        {RIVERS.map(([f, w, p], i) => (
          <polyline key={i} points={at(f, p)} strokeWidth={w} />
        ))}
      </g>
      <g fill="none" stroke="#e8e9ea" strokeLinejoin="round">
        {TRACKS.map(([f, w, p], i) => (
          <polyline key={i} points={at(f, p)} strokeWidth={w} />
        ))}
      </g>
      <g fill="none" stroke="#dfe0e3" strokeLinejoin="round" strokeLinecap="round">
        {ROADS.map(([f, w, p], i) => (
          <polyline key={i} points={at(f, p)} strokeWidth={w + 6} />
        ))}
      </g>
      <g fill="none" stroke="#ffffff" strokeLinejoin="round" strokeLinecap="round">
        {ROADS.map(([f, w, p], i) => (
          <polyline key={i} points={at(f, p)} strokeWidth={w} />
        ))}
      </g>
      <g stroke="#000" strokeOpacity="0.035" strokeWidth="2">
        <path d="M627 1743H4278M627 2522H4278M718 1464V2864M1496 1464V2864M2275 1464V2864M3054 1464V2864M3832 1464V2864" />
      </g>

      <g fontFamily="Inter, 'Open Sans', sans-serif" fontWeight="550">
        {LABELS.map((l, i) => (
          <text
            key={i}
            x={l.x}
            y={l.y}
            fontSize={l.s ?? 29}
            textLength={l.w}
            lengthAdjust="spacingAndGlyphs"
            transform={l.r ? `rotate(${l.r} ${l.x} ${l.y})` : undefined}
            fill={l.c ?? "#929eac"}
            stroke="#fafaf8"
            strokeOpacity="0.8"
            strokeWidth="5"
            paintOrder="stroke"
          >
            {l.t}
          </text>
        ))}
      </g>

      <g stroke="#3c3c32" strokeOpacity="0.4" strokeWidth="2.3" fillOpacity="0.76" strokeLinejoin="round">
        {CELL_SHAPES.map((c) => (
          <polygon key={c.key} points={c.points} fill={c.fill} />
        ))}
      </g>
      <g fill="none" stroke="#808080" strokeLinejoin="round" strokeLinecap="butt">
        {ROUTES.map(([f, w, p], i) => (
          <polyline key={i} points={at(f, p)} strokeWidth={w} />
        ))}
      </g>

      {PINS.map((p, i) => (
        <g key={i} transform={`translate(${p.x} ${p.y})`}>
          <path d="M0 0C-8 -18 -37 -40 -37 -68C-37 -89 -21 -100 0 -100C21 -100 37 -89 37 -68C37 -40 8 -18 0 0Z" fill="#80d8f7" />
          <text x="-11.5" y="-45" textLength="19.5" lengthAdjust="spacingAndGlyphs" fontFamily="'DejaVu Sans', sans-serif" fontWeight="700" fontSize="34" fill="#000">
            {p.n}
          </text>
        </g>
      ))}

      <g fontFamily="'Liberation Sans', Arial, sans-serif" fontSize="35" fill="#000">
        <rect x="2955" y="1540" width="1216.2" height="34" fill="url(#rain)" opacity="0.92" />
        <rect x="2955" y="1540" width="1216.2" height="34" fill="url(#rainStripe)" />
        <rect x="2955" y="1540" width="1216.2" height="3" />
        <text x="2954" y="1530" textAnchor="middle">0</text>
        <text x="3562" y="1530" textAnchor="middle">50</text>
        <text x="4171" y="1530" textAnchor="middle">100</text>
        <text x="2954.5" y="1606" textLength="677" lengthAdjust="spacingAndGlyphs">Acumulado de chuva na última hora (mm)</text>
      </g>
    </svg>
  );
}

/* ---------- emoji ---------- */
function PinEmoji({ className }: { className: string }) {
  return (
    <svg viewBox="0 0 36 36" className={className}>
      <path d="M16.8 16h2.4l-.5 18.5q-.7 1-1.4 0z" fill="#8c8280" />
      <circle cx="18" cy="9.5" r="8.4" fill="#cf2a26" />
      <circle cx="18" cy="8.6" r="6.6" fill="#e5433c" />
      <ellipse cx="15.6" cy="6" rx="3" ry="2.3" fill="#f8aaa4" />
    </svg>
  );
}
function RainEmoji({ className }: { className: string }) {
  return (
    <svg viewBox="0 0 36 36" className={className}>
      <path d="M8 22.5a7 7 0 0 1-1.5-13.4A5 5 0 0 1 12 5.200a7.500 7.500 0 0 1 14.300 2.300 5.200 5.200 0 0 1 3.200 5.500A5.300 5.300 0 0 1 28.500 22.500z" fill="#eef1f8" stroke="#bcc5d6" strokeWidth="1" />
      <path d="M9 17a5.500 4 0 0 0 18 1" fill="none" stroke="#d9deea" strokeWidth="1.600" />
      <g stroke="#4aa3dc" strokeWidth="2.300" strokeLinecap="round">
        <path d="M9 26l-1.300 3M15.500 26l-1.300 3M22 26l-1.300 3M28 26l-1.300 3M12.500 31l-1.200 3M19 31l-1.200 3M25 31l-1.200 3" />
      </g>
    </svg>
  );
}
function BusEmoji({ className }: { className: string }) {
  return (
    <svg viewBox="0 0 36 36" className={className}>
      <rect x="6" y="31" width="5.500" height="5" fill="#3a332e" />
      <rect x="24.500" y="31" width="5.500" height="5" fill="#3a332e" />
      <rect x="1.500" y="11" width="4" height="9" rx="1.500" fill="#3a3a3a" />
      <rect x="30.500" y="11" width="4" height="9" rx="1.500" fill="#3a3a3a" />
      <rect x="5" y="5" width="26" height="27" rx="2" fill="#b98a33" />
      <rect x="8" y="0.500" width="20" height="8" rx="2" fill="#cfc9b8" />
      <rect x="6" y="8" width="24" height="13" fill="#4a8fa3" />
      <path d="M6 21L18 8h5L11 21z" fill="#77b4c2" />
      <rect x="5" y="26" width="26" height="7" fill="#4a3c2c" />
      <circle cx="9.500" cy="24.500" r="2.600" fill="#ffe9a3" />
      <circle cx="26.500" cy="24.500" r="2.600" fill="#ffe9a3" />
      <rect x="13" y="23" width="10" height="4" fill="#f1c24b" />
    </svg>
  );
}
function StopEmoji({ className }: { className: string }) {
  return (
    <svg viewBox="0 0 36 36" className={className}>
      <defs>
        <linearGradient id="stop" x2="0" y2="1">
          <stop offset="0" stopColor="#f0644c" />
          <stop offset="0.400" stopColor="#cf3a22" />
          <stop offset="1" stopColor="#c93821" />
        </linearGradient>
      </defs>
      <path d="M11 .800h14L35.200 11v14L25 35.200H11L.800 25V11z" fill="url(#stop)" stroke="#b5301e" strokeWidth="1" />
    </svg>
  );
}
function TurnEmoji({ className }: { className: string }) {
  return (
    <svg viewBox="0 0 36 36" className={className}>
      <defs>
        <linearGradient id="turn" x2="0" y2="1">
          <stop offset="0" stopColor="#9dbbd9" />
          <stop offset="1" stopColor="#5f7fa3" />
        </linearGradient>
      </defs>
      <rect x="0.700" y="0.700" width="34.600" height="34.600" rx="5" fill="url(#turn)" stroke="#577597" strokeWidth="1.200" />
      <path d="M10 28h5q6 0 6-6V14" fill="none" stroke="#fff" strokeWidth="3.600" />
      <path d="M14 15.500L21 6l7 9.500z" fill="#fff" />
    </svg>
  );
}

const READINGS: { icon: (p: { className: string }) => React.ReactElement; label: string; value: string }[] = [
  { icon: RainEmoji, label: "Hora da leitura:", value: "00:30:00" },
  { icon: RainEmoji, label: "Acumulado 15min:", value: "18.6" },
  { icon: RainEmoji, label: "Acumulado 1h:", value: "75.6" },
  { icon: BusEmoji, label: "Serviços em operação:", value: "397, 388, 759, 393" },
  { icon: StopEmoji, label: "Veículos parados 10min:", value: "3" },
  { icon: StopEmoji, label: "Veículos parados 30min:", value: "3" },
  { icon: TurnEmoji, label: "Veículos desviados 10min:", value: "0" },
  { icon: TurnEmoji, label: "Veículos desviados 30min:", value: "0" },
  { icon: PinEmoji, label: "ID do polígono:", value: "89a8a06e50fffff" },
];

function Popup() {
  return (
    <div className="absolute left-[1371px] top-[286px] h-[438px] w-[752px] rounded-[29px] bg-white pt-[34.5px] font-['Liberation_Sans',Arial,sans-serif] text-[29px] text-[#333] shadow-[0_7px_34px_rgba(0,0,0,0.4)]">
      {READINGS.map((r, i) => (
        <div key={i} className="flex h-[41.1px] items-center pl-[50px] leading-[41px] whitespace-nowrap">
          <r.icon className="mr-[8px] h-[29px] w-[29px] shrink-0" />
          <span className="w-[367px] shrink-0 font-bold">{r.label}</span>
          <span className="text-[29.3px]">{r.value}</span>
        </div>
      ))}
      <svg viewBox="0 0 24 24" className="absolute right-[15px] top-[17px] h-[24px] w-[24px]">
        <path d="M2 2L22 22M22 2L2 22" stroke="#c3c3c3" strokeWidth="5.500" />
      </svg>
      <svg viewBox="0 0 60 28" className="absolute left-[347px] top-[437px] h-[28px] w-[60px]">
        <path d="M0 0H60L32.500 24Q30 27 27.500 24Z" fill="#fff" />
      </svg>
    </div>
  );
}

function ZoomControl() {
  return (
    <div className="absolute left-[25.5px] top-[24px] flex h-[157px] w-[82px] flex-col rounded-[10px] border-[5px] border-black/25 bg-white bg-clip-padding">
      <div className="flex h-[74px] items-center justify-center border-b-[2.4px] border-[#ccc] pt-[11px]">
        <svg viewBox="0 0 30 30" className="h-[30px] w-[30px]">
          <path d="M0 15H30M15 0V30" stroke="#000" strokeWidth="5.500" />
        </svg>
      </div>
      <div className="flex h-[73px] items-center justify-center pt-[10px]">
        <svg viewBox="0 0 30 30" className="h-[30px] w-[30px]">
          <path d="M0 15H30" stroke="#000" strokeWidth="5.500" />
        </svg>
      </div>
    </div>
  );
}

function LayersControl() {
  return (
    <div className="absolute left-[2797px] top-[158px] flex h-[117px] w-[116px] items-center justify-center rounded-[12px] border-[5px] border-black/25 bg-white bg-clip-padding">
      <svg viewBox="0 0 80 76" className="h-[61px] w-[64px]">
        <path d="M0 51L40 27L80 51L40 75Z" fill="#b9b9b9" />
        <path d="M0 51L40 75L80 51" fill="none" stroke="#8a8a8a" strokeWidth="2" />
        <path d="M0 39L40 15L80 39L40 63Z" fill="#cdcdcd" />
        <path d="M0 39L40 63L80 39" fill="none" stroke="#8a8a8a" strokeWidth="2" />
        <path d="M0 26L40 0L80 26L40 50Z" fill="#efefef" />
        <path d="M12 34L40 14L68 34L40 50Z" fill="#dcdcdc" />
        <path d="M0 26L40 50L80 26" fill="none" stroke="#777" strokeWidth="2.500" />
      </svg>
    </div>
  );
}

function ArcLogo() {
  return (
    <svg viewBox="100 95 235 205" preserveAspectRatio="none" className="h-[55px] w-[66px]" fill="none" stroke="#d9e7f1" strokeWidth="13" strokeLinecap="round" strokeLinejoin="round">
      <path d="M167 180L193 124Q211 98 230 124L288 250Q296 272 278 280Q258 286 249 268L212 184" />
      <path d="M212 184L202 208Q212 210 221 205" />
      <path d="M169 189Q160 176 153 170Q138 160 124 170Q112 185 122 203Q150 250 212 254Q230 254 242 247" />
      <path d="M169 189Q182 204 202 209" />
      <path d="M147 238L134 262Q130 280 148 282Q165 284 172 270L180 251" />
      <path d="M264 182L280 150Q290 134 307 142Q318 150 313 172Q306 198 284 226" />
    </svg>
  );
}

export default function App() {
  return (
    <div className="relative h-[2615px] w-[4096px] overflow-hidden bg-linear-to-r from-[#a0dbed] to-[#9bb6e7]">
      <div className="absolute inset-0 bg-linear-to-r from-[#63a7bd] to-[#6587b8] [mask-image:linear-gradient(to_bottom,transparent,black)]" />
      <div className="relative flex h-full flex-col items-center pt-[296px]">
        <div className="h-[2023px] w-[3504px] shrink-0 rounded-[20px] border-2 border-white/70 bg-white/50 p-[11px]">
          <main className="flex h-full w-full flex-col overflow-hidden rounded-[12px] bg-[#0e1117] font-['Noto_Sans_CJK_SC','Noto_Sans',sans-serif] text-[#fafafa]">
            <div className="-mb-[6px] h-[6px] shrink-0 bg-linear-to-r from-[#ee524e] via-[#f6a26a] to-[#fcf391]" />
            <header className="flex h-[225px] shrink-0 items-start justify-end pr-[42px]">
              <div className="flex h-[118px] items-center gap-[56px]">
                <span className="pb-[1px] text-[31.2px] font-normal leading-none">Deploy</span>
                <svg viewBox="0 0 24 36" className="h-[36px] w-[24px]" fill="#fafafa">
                  <circle cx="12" cy="4.500" r="4.200" />
                  <circle cx="12" cy="18" r="4.200" />
                  <circle cx="12" cy="31.500" r="4.200" />
                </svg>
              </div>
            </header>
            <div className="flex flex-1 flex-col items-start pl-[196px] whitespace-nowrap">
              <h1 className="h-[120px] text-[97.300px] font-bold leading-[118px] tracking-[-0.530px]">Monitoramento de chuvas no sistema de transportes</h1>
              <p className="mt-[47px] h-[60px] text-[35.100px] leading-[58px]">
                Abaixo você pode monitorar as rotas de ônibus, volume de precipitação e possíveis pontos de impacto na operação em áreas de aprox. 100m2.
              </p>
              <blockquote className="-ml-[2px] mt-[81px] flex h-[62px] items-center border-l-[2.5px] border-[#e8e8ea] pl-[49px] text-[35.100px]">
                <PinEmoji className="mr-[7px] h-[38px] w-[38px]" />
                <p className="pb-[3px] leading-[54px]">
                  Ponteiros mostram o <b className="tracking-[-0.460px]">Número de veículos parados ou fora de rota</b>
                </p>
              </blockquote>
              <blockquote className="-ml-[2px] mt-[39px] flex h-[62px] items-center border-l-[2.5px] border-[#e8e8ea] pl-[49px] text-[35.100px]">
                <RainEmoji className="mr-[7px] h-[38px] w-[38px]" />
                <p className="pb-[3px] leading-[54px]">
                  Escala de cores mostra a <b className="tracking-[-0.480px]">Estimativa de volume de precipitação (mm) na última 1 hora</b> (segundo a estação mais próxima da área).
                </p>
              </blockquote>
              <button className="mt-[40px] h-[94px] w-[317px] rounded-[20px] border-[2.5px] border-[#3b3d46] bg-[#131720] pb-[3px] text-[35.100px]">
                Atualizar dados
              </button>
              <section className="relative mt-[40px] h-[1127px] w-[2939px] shrink-0 overflow-hidden">
                <MapCanvas />
                <ZoomControl />
                <LayersControl />
                <Popup />
              </section>
            </div>
          </main>
        </div>
        <footer className="mt-[112px] flex h-[60px] items-center gap-[9px]">
          <ArcLogo />
          <span className="font-['Inter',sans-serif] text-[34.900px] font-semibold text-[#d9e7f1]">Captured with Arc</span>
        </footer>
      </div>
    </div>
  );
}
